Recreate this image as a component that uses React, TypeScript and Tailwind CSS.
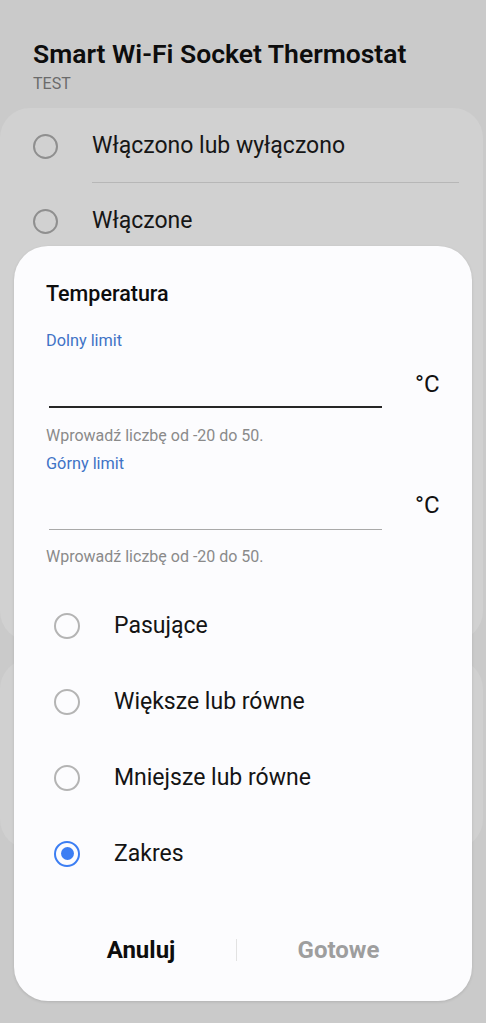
import React from "react";

const font = { fontFamily: "Roboto, 'Noto Sans', sans-serif" };

function Radio({ checked = false, dim = false }: { checked?: boolean; dim?: boolean }) {
  if (checked) {
    return (
      <span className="flex h-[26px] w-[26px] shrink-0 items-center justify-center rounded-full border-[2.5px] border-[#3c7ef3]">
        <span className="h-[13px] w-[13px] rounded-full bg-[#3c7ef3]" />
      </span>
    );
  }
  return (
    <span
      className={
        dim
          ? "h-[25px] w-[25px] shrink-0 rounded-full border-2 border-[#8f8f8f]"
          : "h-[26px] w-[26px] shrink-0 rounded-full border-2 border-[#b4b4b4]"
      }
    />
  );
}

function LimitField({ label, focused }: { label: string; focused: boolean }) {
  return (
    <div>
      <div className="text-[16.3px] leading-[20px] text-[#3f73c6]">{label}</div>
      <div className="flex items-start">
        <div
          className={
            focused
              ? "ml-[3px] h-[57px] w-[333px] border-b-2 border-[#262626]"
              : "ml-[3px] h-[56px] w-[333px] border-b border-[#a9a9a9]"
          }
        />
        <div
          className={
            focused
              ? "ml-[33px] mt-[19px] text-[24px] leading-[28px] text-[#111]"
              : "ml-[33px] mt-[17px] text-[24px] leading-[28px] text-[#111]"
          }
        >
          °C
        </div>
      </div>
      <div className="mt-[17.5px] text-[16px] leading-[20px] text-[#8a8a8a]">
        Wprowadź liczbę od -20 do 50.
      </div>
    </div>
  );
}

export default function App() {
  const options = [
    { label: "Pasujące", checked: false },
    { label: "Większe lub równe", checked: false },
    { label: "Mniejsze lub równe", checked: false },
    { label: "Zakres", checked: true },
  ];

  return (
    <div className="relative h-[1023px] w-[486px] overflow-hidden bg-[#cacaca]" style={font}>
      {/* screen behind the dialog */}
      <div className="px-[33px] pt-[38px]">
        <div className="text-[26.5px] font-semibold leading-[32px] text-[#0d0d0d]">
          Smart Wi-Fi Socket Thermostat
        </div>
        <div className="mt-[4px] text-[16px] leading-[20px] text-[#6b6b6b]">TEST</div>
      </div>

      <div className="mt-[14px] h-[533px] w-[483px] rounded-[30px] bg-[#d1d1d1]">
        <div className="flex h-[74px] items-center pl-[33px] pt-[2px]">
          <Radio dim />
          <span className="ml-[34px] text-[23px] leading-[28px] text-[#161616]">Włączono lub wyłączono</span>
        </div>
        <div className="ml-[92px] mr-[24px] h-px bg-[#b7b7b7]" />
        <div className="flex h-[76px] items-center pl-[33px]">
          <Radio dim />
          <span className="ml-[34px] text-[23px] leading-[28px] text-[#161616]">Włączone</span>
        </div>
      </div>
      <div className="mt-[18px] h-[190px] w-[483px] rounded-[30px] bg-[#d0d0d0]" />

      {/* dialog */}
      <div className="absolute left-[14px] top-[246px] flex h-[755px] w-[458px] flex-col rounded-[34px] bg-[#fcfcfe] shadow-[0_1px_3px_rgba(0,0,0,0.12)]">
        <div className="px-[32px] pt-[35px]">
          <div className="text-[21.5px] font-medium leading-[26px] text-[#0d0d0d]">Temperatura</div>
          <div className="mt-[24px]">
            <LimitField label="Dolny limit" focused />
          </div>
          <div className="mt-[8px]">
            <LimitField label="Górny limit" focused={false} />
          </div>
        </div>

        <div className="mt-[20.5px] px-[32px]">
          {options.map((o) => (
            <div key={o.label} className="flex h-[76px] items-center pl-[8px]">
              <Radio checked={o.checked} />
              <span className="ml-[34px] text-[23px] leading-[28px] text-[#141414]">{o.label}</span>
            </div>
          ))}
        </div>

        <div className="mt-[34px] flex h-[48px] items-center px-[32px]">
          <button className="w-[190px] text-[24px] font-bold leading-[28px] text-[#0d0d0d]">Anuluj</button>
          <span className="h-[22px] w-px bg-[#e2e2e2]" />
          <button className="flex-1 text-[24px] font-bold leading-[28px] text-[#9e9e9e]">Gotowe</button>
        </div>
      </div>
    </div>
  );
}
